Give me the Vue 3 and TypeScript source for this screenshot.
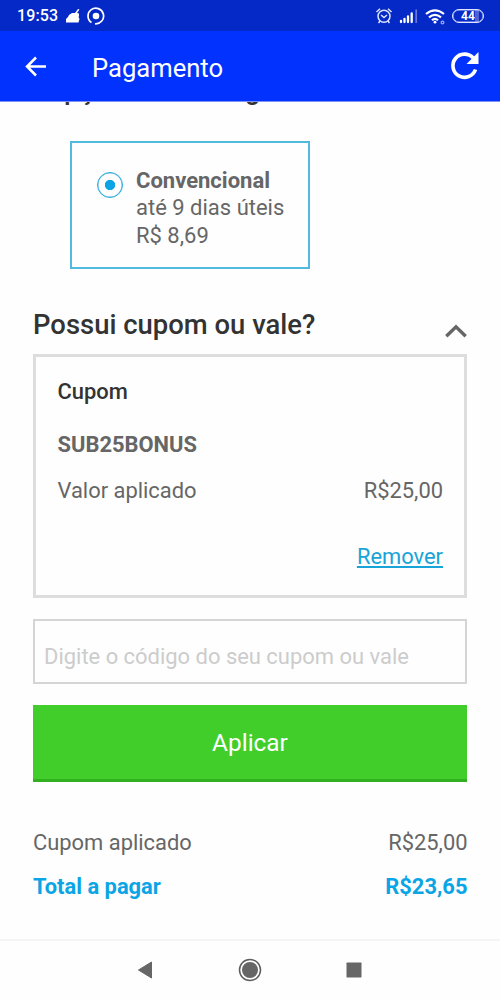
<script setup lang="ts">
import { ref } from 'vue'

const code = ref('')
const expanded = ref(true)
const delivery = ref('convencional')
</script>

<template>
  <div class="screen">
    <header class="status">
      <span class="clock">19:53</span>
      <svg class="cleaner" width="16" height="16" viewBox="0 0 16 16">
        <path fill="#fff" d="M1 14.500V11L3 9L4 7L7 5H10L13 1L14.500 1.500L12 5L14 5.500V8L13.500 9L14.500 11L13.500 14.500Z" />
      </svg>
      <svg class="record" width="18" height="18" viewBox="0 0 18 18">
        <path d="M4.500 15.500A7.800 7.800 0 1 1 8 16.750H11" fill="none" stroke="#fff" stroke-width="1.700" />
        <circle cx="9" cy="9" r="3.300" fill="#fff" />
      </svg>
      <svg class="indicators" width="74" height="20" viewBox="0 0 74 20" fill="none" stroke="#dce3ff">
        <circle cx="8" cy="10.200" r="6" stroke-width="1.500" />
        <path d="M.5 6L4 2.800M15.500 6L12 2.800M5 9L8 11.500L11 9M4 15L2.500 17M12 15L13.500 17" stroke-width="1.500" />
        <path d="M25 16V15M28.500 16V13M32 16V10.500M35.700 16V7.500" stroke-width="2.300" stroke="#fff" stroke-linecap="round" />
        <path d="M40.200 17V3.500" stroke-width="1.700" stroke="#6678da" />
        <path d="M50 8Q59 .8 68 8M53 11.300Q59 6.300 65 11.300M56 14.300Q59 11.300 62 14.300" stroke="#fff" stroke-width="2.200" />
        <circle cx="59" cy="16.200" r="1.400" fill="#fff" stroke="none" />
        <circle cx="66.500" cy="16.500" r="1.400" stroke="#9dacf4" stroke-width="1.200" />
      </svg>
      <span class="battery">44</span>
    </header>

    <nav class="appbar">
      <svg class="back" width="22" height="22" viewBox="0 0 22 22" fill="none" stroke="#fff" stroke-width="2.500">
        <path d="M11 1.500L2 10.500L11 19.500M2 10.500H21" />
      </svg>
      <h1>Pagamento</h1>
      <svg class="refresh" width="30" height="30" viewBox="0 0 30 30">
        <path d="M25.500 18.500A11.600 11.600 0 1 1 23.200 7" fill="none" stroke="#fff" stroke-width="3.700" />
        <path d="M28.500 1V13H16.500Z" fill="#fff" />
      </svg>
    </nav>

    <main>
      <div class="clipped"><h2>Opções de entrega</h2></div>

      <label class="delivery">
        <input v-model="delivery" type="radio" value="convencional" />
        <span class="radio"></span>
        <span class="details">
          <strong>Convencional</strong>
          <span class="days">até 9 dias úteis</span>
          <span class="price">R$ 8,69</span>
        </span>
      </label>

      <div class="section-head" @click="expanded = !expanded">
        <h2>Possui cupom ou vale?</h2>
        <svg width="22" height="14" viewBox="0 0 22 14" fill="none" stroke="#666" stroke-width="3.400">
          <path d="M1.300 12.300L11 2.800L20.700 12.300" />
        </svg>
      </div>

      <section v-if="expanded" class="coupon">
        <h3>Cupom</h3>
        <strong>SUB25BONUS</strong>
        <div class="row value"><span class="label">Valor aplicado</span><span class="money">R$25,00</span></div>
        <a>Remover</a>
      </section>

      <input v-model="code" class="code" type="text" placeholder="Digite o código do seu cupom ou vale" />
      <button class="apply"><span>Aplicar</span></button>

      <div class="row applied"><span class="label">Cupom aplicado</span><span class="money">R$25,00</span></div>
      <div class="row total"><span class="label">Total a pagar</span><span class="money">R$23,65</span></div>
    </main>

    <footer class="navbar">
      <svg width="16" height="18" viewBox="0 0 16 18"><path d="M.5 9L13.500 1V17Z" fill="#666" stroke="#666" stroke-linejoin="round" /></svg>
      <svg width="24" height="24" viewBox="0 0 24 24"><circle cx="12" cy="12" r="10.500" fill="none" stroke="#5c5c5c" stroke-width="1.500" /><circle cx="12" cy="12" r="8" fill="#666" /></svg>
      <svg width="16" height="16" viewBox="0 0 16 16"><rect x=".5" y=".5" width="15" height="15" rx=".7" fill="#666" /></svg>
    </footer>
  </div>
</template>

<style>
body { margin: 0; background: #fff; }
</style>

<style scoped>
* { box-sizing: border-box; }
.screen {
  width: 500px;
  height: 1000px;
  display: flex;
  flex-direction: column;
  overflow: hidden;
  background: #fefefe;
  color: #666;
  font: 21.9px/28px Roboto, "Noto Sans", sans-serif;
}
h1, h2, h3 { margin: 0; }
svg { display: block; flex: none; }

.status { height: 31px; flex: none; display: flex; align-items: center; padding: 0 16px 0 17px; background: #0529c6; color: #fff; }
.clock { width: 41px; font-size: 16px; font-weight: 500; line-height: 20px; letter-spacing: .1px; }
.cleaner { margin-left: 7px; }
.record { margin-left: 6px; }
.indicators { margin-left: auto; }
.battery {
  width: 32px;
  height: 14px;
  margin-left: 2px;
  border: 1px solid #e0e6ff;
  box-shadow: inset 0 0 0 .5px #b9c5ff;
  border-radius: 7px;
  background: linear-gradient(90deg, transparent 72%, #5063d5 72%, #5063d5 86%, transparent 86%);
  font-size: 12px;
  font-weight: 700;
  line-height: 12.500px;
  text-align: center;
}

.appbar { height: 71px; flex: none; display: flex; align-items: center; padding: 2px 20px 0 25px; background: #0232fe; border-bottom: 1px solid #7d92f5; color: #fff; }
.appbar h1 { margin-left: 45px; padding-top: 2px; font-size: 25.600px; font-weight: 400; line-height: 32px; }
.refresh { margin-left: auto; margin-top: -3px; }

main { height: 837px; flex: none; padding: 0 33px; display: flex; flex-direction: column; }
.clipped { height: 39px; flex: none; overflow: hidden; padding-left: 12px; }
h2 { font-size: 27.450px; font-weight: 500; line-height: 34px; color: #333; white-space: nowrap; }
.clipped h2 { margin-top: -29px; }

.delivery { width: 240px; height: 128px; flex: none; margin-left: 37.400px; padding: 24px 0 0 25px; display: flex; border: 2px solid #52b9e0; }
.delivery input { appearance: none; width: 0; height: 0; margin: 0; }
.radio { width: 26px; height: 26px; flex: none; margin-top: 5px; border: 1px solid #25a8db; box-shadow: inset 0 0 0 .5px #66bfe2; border-radius: 50%; background: radial-gradient(circle, #0ba5e5 4.800px, transparent 5.500px); }
.details { margin-left: 12.600px; display: flex; flex-direction: column; font-size: 22px; line-height: 27.300px; white-space: nowrap; }
strong { font-weight: 700; }

.section-head { height: 85px; flex: none; display: flex; justify-content: space-between; padding-top: 39px; }
.section-head svg { margin-top: 16px; }

.coupon { height: 244px; flex: none; padding: 21px 21px 0 21.500px; border: 3px solid #ddd; display: flex; flex-direction: column; }
.coupon h3 { font-size: 21.900px; font-weight: 500; line-height: 28px; color: #333; }
.coupon strong { margin-top: 25px; }
.row { display: flex; justify-content: space-between; }
.value { margin-top: 18px; }
.coupon a { margin-top: 38px; align-self: flex-end; color: #18a4d8; text-decoration: underline; text-decoration-thickness: 2px; text-underline-offset: 2px; }

.code { height: 65px; flex: none; margin: 21px 0 0; padding: 10px 9px 0; border: 2px solid #d5d5d5; border-radius: 0; outline: 0; background: transparent; color: #666; font: inherit; font-size: 21.950px; }
.code::placeholder { color: #ccc; opacity: 1; }
.apply { height: 77px; flex: none; margin: 21px 0 1px; padding: 1px 0 0; border: 0; border-bottom: 3px solid #31b11f; background: #41ce2a; color: #fff; font: 24.400px/30px Roboto, sans-serif; }

.applied { margin-top: 46px; }
.total { margin-top: 16px; color: #0ba5e5; font-weight: 700; }
.applied .money, .total .money { margin-right: -.5px; }

.navbar { height: 61px; flex: none; display: flex; align-items: center; justify-content: center; gap: 84px; padding-bottom: 2px; border-top: 2px solid #f5f5f5; }
</style>
